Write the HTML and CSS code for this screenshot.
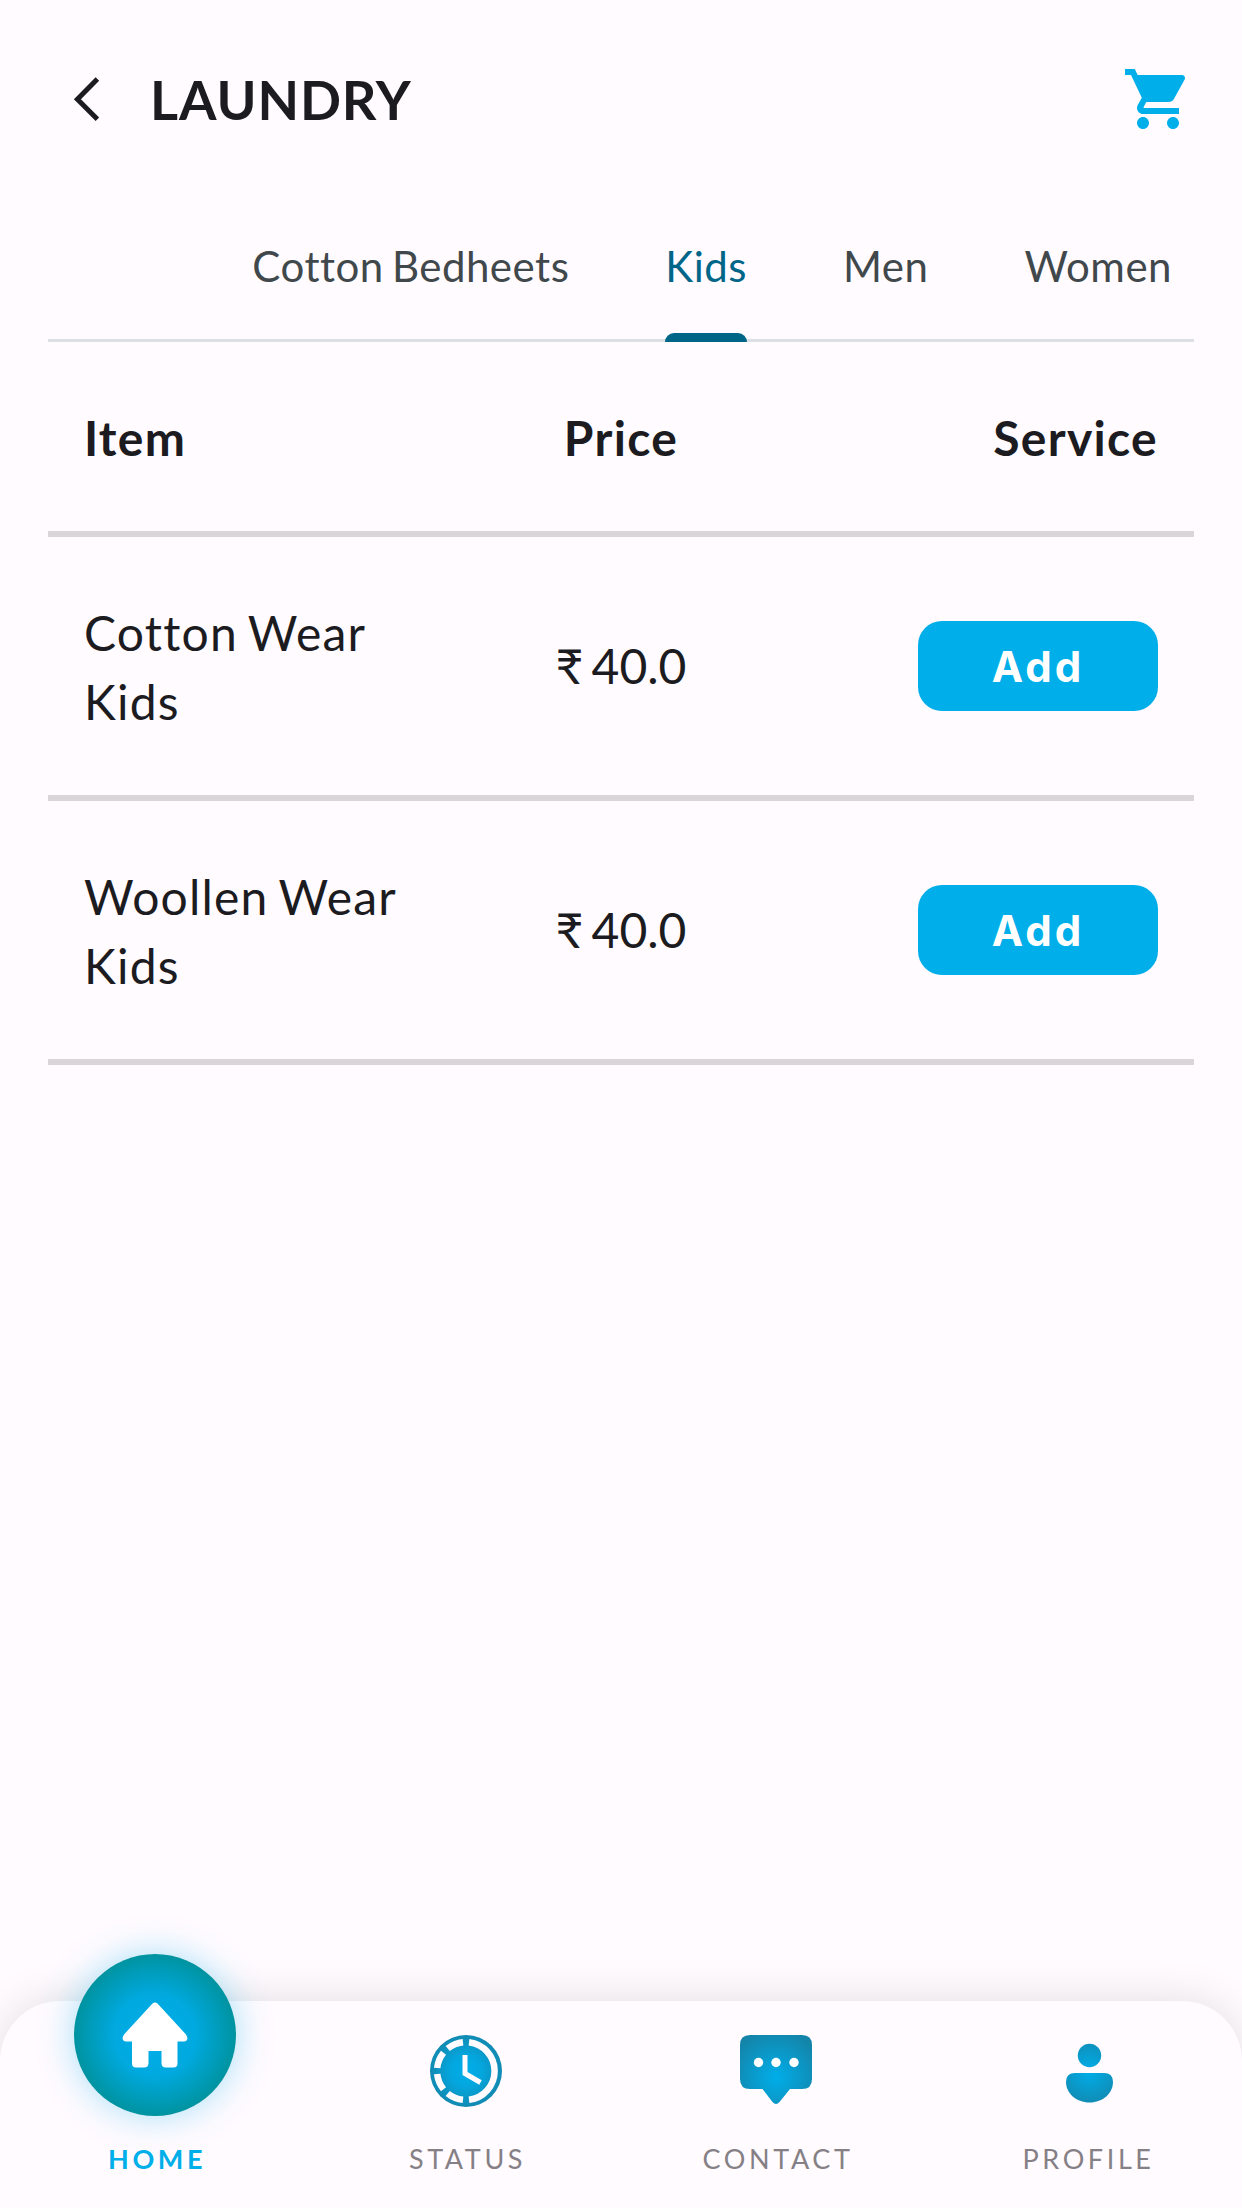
FILE: index.html
```html
<!DOCTYPE html>
<html lang="en">
<head>
    <meta charset="UTF-8">
    <meta name="viewport" content="width=device-width, initial-scale=1.0">
    <title>Laundry</title>
    <link rel="stylesheet" href="styles.css">
</head>
<body>
    <header class="app-bar">
        <button class="back-button" aria-label="Back">
            <svg width="28" height="46" viewBox="0 0 28 46"><path d="M24.4 2.9 L4.4 23.3 L24.4 43.2" fill="none" stroke="#1c1b1f" stroke-width="5"/></svg>
        </button>
        <h1>LAUNDRY</h1>
        <button class="cart-button" aria-label="Cart">
            <svg width="72" height="72" viewBox="0 0 24 24"><path fill="#00aeea" d="M7 18c-1.1 0-1.99.9-1.99 2S5.9 22 7 22s2-.9 2-2-.9-2-2-2zM1 2v2h2l3.6 7.59-1.35 2.45c-.16.28-.25.61-.25.96 0 1.1.9 2 2 2h12v-2H7.42c-.14 0-.25-.11-.25-.25l.03-.12.9-1.63h7.45c.75 0 1.41-.41 1.75-1.03l3.58-6.49c.08-.14.12-.31.12-.48 0-.55-.45-1-1-1H5.21l-.94-2H1zm16 16c-1.1 0-1.99.9-1.99 2s.89 2 1.99 2 2-.9 2-2-.9-2-2-2z"/></svg>
        </button>
    </header>

    <nav class="tabs">
        <a class="tab">Cotton Bedheets</a>
        <a class="tab active">Kids</a>
        <a class="tab">Men</a>
        <a class="tab">Women</a>
    </nav>

    <main class="price-list">
        <div class="row row-head">
            <span>Item</span>
            <span class="heading-price">Price</span>
            <span class="heading-service">Service</span>
        </div>
        <div class="row">
            <span class="item">Cotton Wear Kids</span>
            <span class="price">₹ 40.0</span>
            <button class="add-button">Add</button>
        </div>
        <div class="row">
            <span class="item">Woollen Wear Kids</span>
            <span class="price">₹ 40.0</span>
            <button class="add-button">Add</button>
        </div>
    </main>

    <footer class="bottom-nav">
        <a class="nav-item active">
            <span class="nav-icon home-circle">
                <svg width="66" height="66" viewBox="0 0 66 66"><path fill="#fff" d="M30.5 1.5 Q33 -0.5 35.5 1.5 L64 32.5 Q67.5 38.5 62 39.5 H55.5 V61.5 Q55.5 65.5 51.5 65.5 H44 Q39.5 65.5 39.5 61 V49 H26.5 V61 Q26.5 65.5 22 65.5 H14 Q10 65.5 10 61.5 V39.5 H4 Q-1.5 38.5 2 32.5 Z"/></svg>
            </span>
            <span class="nav-label">HOME</span>
        </a>
        <a class="nav-item">
            <span class="nav-icon">
                <svg width="72" height="72" viewBox="0 0 72 72">
                    <defs>
                        <radialGradient id="clockFill" gradientUnits="userSpaceOnUse" cx="36" cy="36" r="40">
                            <stop offset="0" stop-color="#00aeea"/>
                            <stop offset="0.4" stop-color="#04a6de"/>
                            <stop offset="1" stop-color="#1484a8"/>
                        </radialGradient>
                    </defs>
                    <circle cx="36" cy="36" r="36" fill="url(#clockFill)"/>
                    <g fill="none" stroke="#fffbff" stroke-width="6.5">
                        <path d="M39 7.2 A29 29 0 0 1 39 64.8"/>
                        <path d="M33 7.2 A29 29 0 0 0 17.7 13.5"/>
                        <path d="M13.5 17.7 A29 29 0 0 0 7.2 33"/>
                        <path d="M7.2 39 A29 29 0 0 0 13.5 54.3"/>
                        <path d="M17.7 58.5 A29 29 0 0 0 33 64.8"/>
                        <path d="M35 20 V38.5 L50.5 47.5" stroke-width="5"/>
                    </g>
                </svg>
            </span>
            <span class="nav-label">STATUS</span>
        </a>
        <a class="nav-item">
            <span class="nav-icon">
                <svg width="72" height="72" viewBox="0 0 72 72">
                    <defs>
                        <radialGradient id="chatFill" gradientUnits="userSpaceOnUse" cx="36" cy="42" r="48">
                            <stop offset="0" stop-color="#00aeea"/>
                            <stop offset="1" stop-color="#1484a8"/>
                        </radialGradient>
                    </defs>
                    <path fill="url(#chatFill)" d="M10 0 H62 Q72 0 72 10 V44 Q72 54 62 54 H50 L39.5 67 Q36 71 32.5 67 L22.5 54 H10 Q0 54 0 44 V10 Q0 0 10 0 Z"/>
                    <g fill="#fff">
                        <circle cx="18.5" cy="27.5" r="4.7"/>
                        <circle cx="36" cy="27.5" r="4.7"/>
                        <circle cx="54" cy="27.5" r="4.7"/>
                    </g>
                </svg>
            </span>
            <span class="nav-label">CONTACT</span>
        </a>
        <a class="nav-item">
            <span class="nav-icon">
                <svg width="72" height="72" viewBox="0 0 72 72">
                    <defs>
                        <radialGradient id="userFill" gradientUnits="userSpaceOnUse" cx="38" cy="36" r="40">
                            <stop offset="0" stop-color="#00aeea"/>
                            <stop offset="1" stop-color="#1484a8"/>
                        </radialGradient>
                    </defs>
                    <g fill="url(#userFill)">
                        <circle cx="38.5" cy="20.5" r="11.7"/>
                        <path d="M24 38 H53 Q62 38 62 47 C62 58 52 67.5 38.5 67.5 C25 67.5 15 58 15 47 Q15 38 24 38 Z"/>
                    </g>
                </svg>
            </span>
            <span class="nav-label">PROFILE</span>
        </a>
    </footer>
</body>
</html>
```
FILE: styles.css
```css
* {
    margin: 0;
    padding: 0;
    box-sizing: border-box;
}

body {
    font-family: Lato, sans-serif;
    background: #fffbff;
    color: #1c1b1f;
    height: 2208px;
    display: flex;
    flex-direction: column;
    overflow: hidden;
}

button {
    border: none;
    background: none;
    font-family: inherit;
    cursor: pointer;
}

svg {
    display: block;
}

.app-bar {
    height: 198px;
    padding: 0 48px 0 73px;
    display: flex;
    align-items: center;
}

.app-bar h1 {
    flex: 1;
    margin-left: 49px;
    font-size: 54px;
    font-weight: 700;
    letter-spacing: 0.9px;
}

.tabs {
    height: 144px;
    margin: 0 48px;
    padding-right: 22px;
    display: flex;
    justify-content: flex-end;
    gap: 96px;
    border-bottom: 3px solid #dce0e4;
}

.tab {
    height: 144px;
    line-height: 136px;
    font-size: 42px;
    letter-spacing: 0.5px;
    word-spacing: -3px;
    color: #40484c;
}

.tab.active {
    color: #006688;
    display: flex;
    flex-direction: column;
}

.tab.active::after {
    content: "";
    height: 9px;
    margin-top: -1px;
    border-radius: 9px 9px 0 0;
    background: #006688;
}

.price-list {
    flex: 1;
    margin: 0 48px;
}

.row {
    height: 264px;
    padding: 0 36px;
    display: grid;
    grid-template-columns: 1fr 1fr 1fr;
    align-items: center;
    border-bottom: 6px solid #dad5d9;
    font-size: 48px;
    line-height: 69px;
}

.row-head {
    height: 195px;
    padding-top: 2px;
    font-weight: 700;
    letter-spacing: 1.3px;
}

.heading-price {
    text-align: center;
}

.heading-service {
    text-align: right;
}

.item {
    padding-top: 1px;
    letter-spacing: 1.2px;
    word-spacing: -3px;
}

.price {
    padding-bottom: 2px;
    text-align: center;
    word-spacing: -4px;
}

.add-button {
    justify-self: end;
    width: 240px;
    height: 90px;
    border-radius: 24px;
    background: #00aeea;
    color: #fff;
    font-family: Inter, sans-serif;
    font-size: 42px;
    font-weight: 700;
    letter-spacing: 3px;
}

.bottom-nav {
    height: 207px;
    display: flex;
    border-radius: 60px 60px 0 0;
    background: #fffbff;
    box-shadow: 0 0 45px rgba(0, 0, 0, 0.12);
}

.nav-item {
    flex: 1;
    padding-top: 34px;
    display: flex;
    flex-direction: column;
    align-items: center;
    gap: 34px;
}

.nav-icon {
    width: 72px;
    height: 72px;
}

.nav-label {
    margin-right: -3.6px;
    font-size: 27px;
    line-height: 36px;
    letter-spacing: 3.6px;
    color: #858085;
}

.nav-item.active {
    padding-top: 0;
    margin-top: -47px;
    gap: 25px;
}

.nav-item.active .nav-label {
    color: #00aeea;
    font-weight: 700;
}

.home-circle {
    width: 162px;
    height: 162px;
    display: flex;
    align-items: center;
    justify-content: center;
    border-radius: 50%;
    background: radial-gradient(circle closest-side, #00aeea 0%, #00a9df 50%, #0093a0 100%);
    box-shadow: 0 0 36px rgba(0, 174, 234, 0.35);
}
```
